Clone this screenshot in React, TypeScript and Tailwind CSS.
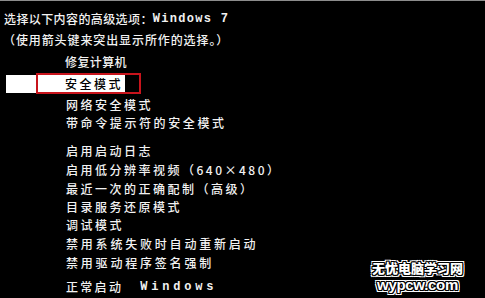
import React from "react";

const Row = ({ h, children, className = "" }: { h: string; children: React.ReactNode; className?: string }) => (
  <div className={`flex items-center ${h} ${className}`}>{children}</div>
);

export default function App() {
  const items1 = ["网络安全模式", "带命令提示符的安全模式"];
  return (
    <div className="relative w-[485px] h-[298px] overflow-hidden bg-black border-t border-[#8c8c8c] text-[#f2f2f2] text-[12px] leading-none [font-family:'Noto_Sans_CJK_SC','Noto_Sans_CJK_JP',sans-serif] font-medium">
      <div className="flex flex-col pt-[8px]">
        <Row h="h-[20px]" className="pl-[4px]">
          <span className="tracking-[0.4px]">选择以下内容的高级选项：</span>
          <span className="[font-family:'Liberation_Mono',monospace] font-bold tracking-[1.3px]">Windows 7</span>
        </Row>
        <Row h="h-[22px]" className="pl-[3px]">
          <span className="tracking-[0.9px]">（使用箭头键来突出显示所作的选择。）</span>
        </Row>
        <Row h="h-[22px]" className="pl-[65px]">
          <span className="tracking-[0.4px]">修复计算机</span>
        </Row>
        <Row h="h-[22px]">
          <div className="ml-[6px] w-[119px] h-[18px] bg-white text-black flex items-center pl-[59px]">
            <span className="tracking-[2.5px]">安全模式</span>
          </div>
        </Row>
        <Row h="h-[19px]" className="pl-[66px]">
          <span className="tracking-[2.5px]">{items1[0]}</span>
        </Row>
        <Row h="h-[18px]" className="pl-[66px]">
          <span className="tracking-[2.6px]">{items1[1]}</span>
        </Row>
        <div className="flex flex-col pl-[66px] mt-[9px]">
          <Row h="h-[19px]"><span className="tracking-[2.5px]">启用启动日志</span></Row>
          <Row h="h-[19px]"><span className="tracking-[2.5px]">启用低分辨率视频（640×480）</span></Row>
          <Row h="h-[19px]"><span className="tracking-[2.5px]">最近一次的正确配制（高级）</span></Row>
          <Row h="h-[18px]"><span className="tracking-[2.5px]">目录服务还原模式</span></Row>
          <Row h="h-[18px]"><span className="tracking-[2.5px]">调试模式</span></Row>
          <Row h="h-[19px]"><span className="tracking-[2.8px]">禁用系统失败时自动重新启动</span></Row>
          <Row h="h-[19px]"><span className="tracking-[2.8px]">禁用驱动程序签名强制</span></Row>
          <Row h="h-[20px]" className="mt-[5px]">
            <span className="tracking-[2.3px]">正常启动</span>
            <span className="ml-[17px] [font-family:'Liberation_Mono',monospace] font-bold tracking-[3.8px]">Windows</span>
          </Row>
        </div>
      </div>

      <div className="absolute left-[36px] top-[72px] w-[105px] h-[21px] border-2 border-[#c8141c]" />

      <div className="absolute left-[372px] top-[259px] flex flex-col items-center gap-[2px] font-bold text-white [text-shadow:1px_0_0_#000,-1px_0_0_#000,0_1px_0_#000,0_-1px_0_#000,1px_1px_0_#000,-1px_-1px_0_#000,1px_-1px_0_#000,-1px_1px_0_#000,2px_0_0_#fff,-2px_0_0_#fff,0_2px_0_#fff,0_-2px_0_#fff,2px_2px_0_#fff,-2px_-2px_0_#fff,2px_-2px_0_#fff,-2px_2px_0_#fff]">
        <span className="text-[13px] leading-[16px] [font-family:'Noto_Sans_CJK_SC',sans-serif] font-black">无忧电脑学习网</span>
        <span className="text-[15px] leading-[14px] tracking-[-0.3px] [font-family:'Liberation_Sans',Arial,sans-serif]">wypcw.com</span>
      </div>
    </div>
  );
}
